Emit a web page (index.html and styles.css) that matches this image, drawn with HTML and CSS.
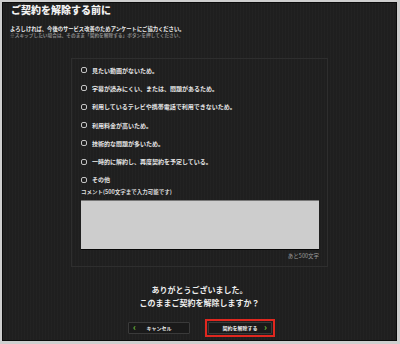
FILE: index.html
```html
<!DOCTYPE html>
<html lang="ja">
<head>
    <meta charset="UTF-8">
    <title>ご契約を解除する前に</title>
    <link rel="stylesheet" href="styles.css">
</head>
<body>
    <div class="frame">
        <h1 class="title">ご契約を解除する前に</h1>
        <div class="intro">
            <p class="lead">よろしければ、今後のサービス改善のためアンケートにご協力ください。</p>
            <p class="note">※スキップしたい場合は、そのまま「契約を解除する」ボタンを押してください。</p>
        </div>
        <div class="panel">
            <ul class="reasons">
                <li><span class="box"></span>見たい動画がないため。</li>
                <li><span class="box"></span>字幕が読みにくい、または、問題があるため。</li>
                <li><span class="box"></span>利用しているテレビや携帯電話で利用できないため。</li>
                <li><span class="box"></span>利用料金が高いため。</li>
                <li><span class="box"></span>技術的な問題が多いため。</li>
                <li><span class="box"></span>一時的に解約し、再度契約を予定している。</li>
                <li><span class="box"></span>その他</li>
            </ul>
            <div class="comment-label">コメント(500文字まで入力可能です)</div>
            <div class="comment"></div>
            <div class="counter">あと500文字</div>
        </div>
        <div class="thanks">
            <p>ありがとうございました。</p>
            <p>このままご契約を解除しますか？</p>
        </div>
        <div class="actions">
            <button class="btn cancel"><span class="arrow">‹</span>キャンセル</button>
            <div class="highlight">
                <button class="btn confirm">契約を解除する<span class="arrow">›</span></button>
            </div>
        </div>
    </div>
</body>
</html>
```

FILE: styles.css
```css
/* cancel survey page */
body {
    margin: 0;
    background-color: #cfcfcf;
    font-family: "Noto Sans CJK JP", "Noto Sans", sans-serif;
}
.frame {
    margin: 2px 0 0 2px;
    width: 395px;
    height: 339px;
    box-sizing: border-box;
    border: 1px solid #0c0c0c;
    background-color: #1f1f1f;
    background-image: repeating-linear-gradient(90deg, rgba(255,255,255,0.015) 0 1px, transparent 1px 3px);
    color: #fff;
}
.title {
    margin: 0;
    padding-left: 8px;
    font-size: 10px;
    line-height: 13px;
    font-weight: 900;
    color: #f2f2f2;
}
.intro {
    margin-top: 10px;
    padding-left: 7px;
}
.intro p {
    margin: 0;
    line-height: 6px;
    font-weight: bold;
    white-space: nowrap;
}
.lead { color: #eee; font-size: 5.3px; }
.note { color: #8a8a8a; font-size: 4.7px; }
.panel {
    width: 257px;
    box-sizing: border-box;
    margin: 20px 0 0 68px;
    border: 1px solid #2e2e2e;
    padding: 2px 8px 6px 9px;
}
.reasons {
    list-style: none;
    margin: 0;
    padding: 0;
}
.reasons li {
    display: flex;
    align-items: center;
    height: 18.3px;
    font-size: 6px;
    font-weight: bold;
    color: #e6e6e6;
    white-space: nowrap;
}
.box {
    width: 4px;
    height: 4px;
    border: 1px solid #c4c4c4;
    border-radius: 2px;
    margin-right: 5px;
}
.comment-label {
    font-size: 5.5px;
    line-height: 7px;
    font-weight: bold;
    color: #ddd;
}
.comment {
    margin-top: 4px;
    height: 48px;
    background-color: #cdcdcd;
    border-top: 1px solid #777;
    border-bottom: 1px solid #080808;
}
.counter {
    margin-top: 2.5px;
    text-align: right;
    font-size: 5.5px;
    line-height: 7px;
    color: #9a9a9a;
}
.thanks {
    margin-top: 16px;
    text-align: center;
}
.thanks p {
    margin: 0;
    font-size: 8px;
    line-height: 13px;
    font-weight: bold;
    color: #eee;
}
.actions {
    display: flex;
    align-items: center;
    gap: 15px;
    margin-top: 10px;
    padding-left: 125px;
}
.btn {
    display: flex;
    align-items: center;
    justify-content: center;
    position: relative;
    box-sizing: border-box;
    height: 12px;
    padding: 0;
    background-color: #1a1a1a;
    border: 1px solid #3a3a3a;
    border-radius: 1px;
    color: #eee;
    font-family: inherit;
    font-size: 5px;
    font-weight: bold;
}
.cancel { width: 62px; }
.confirm { width: 64px; }
.arrow {
    position: absolute;
    top: -1px;
    color: #6fbf3c;
    font-size: 9px;
    line-height: 12px;
}
.cancel .arrow { left: 4px; }
.confirm .arrow { right: 4px; }
.highlight {
    border: 2px solid #e0271f;
    padding: 1px;
}
```
